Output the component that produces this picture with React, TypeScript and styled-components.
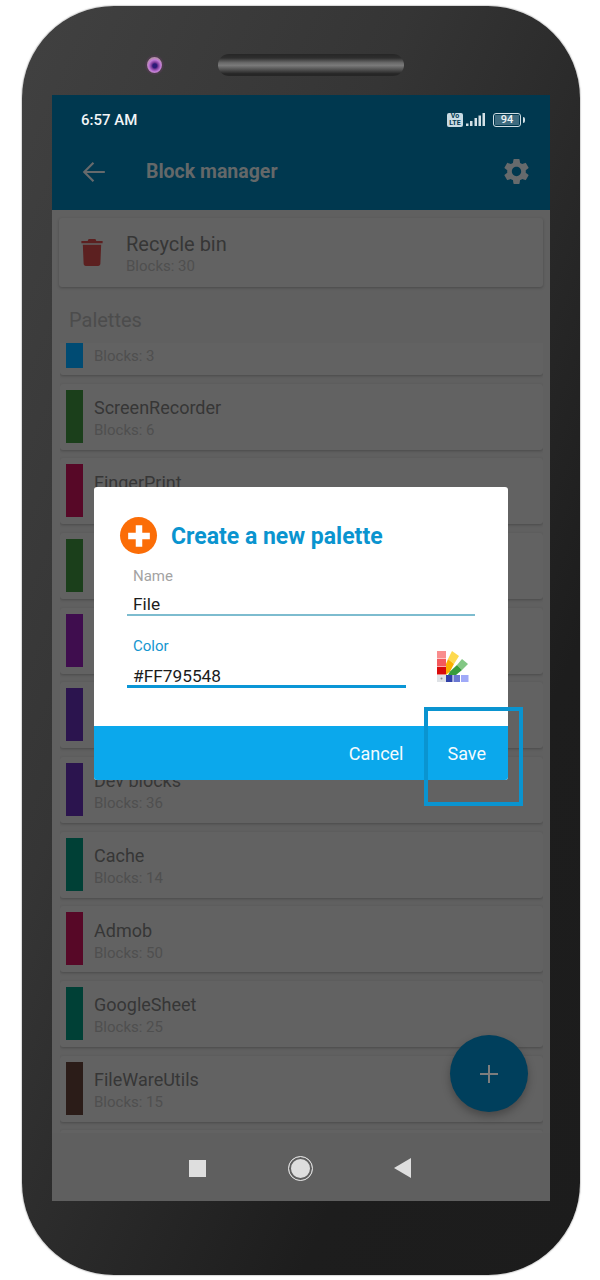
import React from 'react';
import styled, { createGlobalStyle } from 'styled-components';

// rows hidden behind the dialog carry no text, only their colour
const palettes: { name?: string; blocks?: number; color: string }[] = [
  { blocks: 3, color: '#004b73' },
  { name: 'ScreenRecorder', blocks: 6, color: '#1b3f1b' },
  { name: 'FingerPrint', color: '#570827' },
  { color: '#1b3f1b' },
  { color: '#3f0d4e' },
  { color: '#2b144e' },
  { name: 'Dev blocks', blocks: 36, color: '#2b144e' },
  { name: 'Cache', blocks: 14, color: '#004036' },
  { name: 'Admob', blocks: 50, color: '#570827' },
  { name: 'GoogleSheet', blocks: 25, color: '#004036' },
  { name: 'FileWareUtils', blocks: 15, color: '#2b1c18' },
];

function App() {
  return (
    <Page>
      <GlobalStyle />
      <Phone>
        <TopBezel>
          <Camera />
          <Speaker />
        </TopBezel>
        <Screen>
          <Header>
            <StatusBar>
              <Time>6:57 AM</Time>
              <StatusIcons>
                <VoLte>
                  <span>Vo</span>
                  <span>LTE</span>
                </VoLte>
                <Signal viewBox="0 0 19 13">
                  <rect x="0" y="10.500" width="2.500" height="2.500" />
                  <rect x="4" y="8" width="2.500" height="5" />
                  <rect x="8.500" y="5" width="2.500" height="8" />
                  <rect x="12.500" y="2.500" width="2.500" height="10.500" />
                  <rect x="16.500" y="0" width="2.500" height="13" />
                </Signal>
                <Battery>
                  <BatteryLevel>94</BatteryLevel>
                </Battery>
              </StatusIcons>
            </StatusBar>
            <Toolbar>
              <IconSvg viewBox="0 0 24 24" width="26" height="26" fill="none" stroke="#666a6c" strokeWidth="2">
                <path d="M22 12H3.500M11.500 3.500L3 12l8.500 8.500" />
              </IconSvg>
              <ToolbarTitle>Block manager</ToolbarTitle>
              <IconSvg viewBox="0 0 24 24" width="31" height="31" fill="#666a6c">
                <path d="M19.140 12.940c.04-.3.06-.61.06-.94 0-.32-.02-.64-.07-.94l2.030-1.580a.49.49 0 0 0 .12-.61l-1.920-3.320a.488.488 0 0 0-.59-.22l-2.390.96c-.5-.38-1.030-.7-1.620-.94l-.36-2.540a.484.484 0 0 0-.48-.41h-3.840c-.24 0-.43.17-.47.41l-.36 2.540c-.59.24-1.130.57-1.620.94l-2.390-.96c-.22-.08-.47 0-.59.22L2.740 8.870c-.12.21-.08.47.12.61l2.030 1.580c-.05.3-.09.63-.09.94s.02.64.07.94l-2.030 1.580a.49.49 0 0 0-.12.61l1.920 3.320c.12.22.37.29.59.22l2.390-.96c.5.38 1.030.7 1.620.94l.36 2.540c.05.24.24.41.48.41h3.840c.24 0 .44-.17.47-.41l.36-2.540c.59-.24 1.130-.56 1.620-.94l2.390.96c.22.08.47 0 .59-.22l1.920-3.320c.12-.22.07-.47-.12-.61l-2.010-1.580zM12 15.600c-1.980 0-3.600-1.620-3.600-3.600s1.620-3.600 3.600-3.600 3.600 1.620 3.600 3.600-1.620 3.600-3.600 3.600z" />
              </IconSvg>
            </Toolbar>
          </Header>

          <Body>
            <RecycleCard>
              <svg viewBox="0 0 22 28" width="22" height="27" fill="#5c2020">
                <path d="M7.500 0h7l1 2H22v2.500H0V2h6.500z" />
                <path d="M1.500 6h19l-.8 19.500c0 1.300-1 2.500-2.400 2.500H4.700c-1.400 0-2.400-1.200-2.400-2.500z" />
              </svg>
              <RecycleText>
                <RecycleTitle>Recycle bin</RecycleTitle>
                <BlockCount>Blocks: 30</BlockCount>
              </RecycleText>
            </RecycleCard>
            <SectionLabel>Palettes</SectionLabel>
            <ListViewport>
              <List>
                {palettes.map((palette, i) => (
                  <PaletteCard key={i}>
                    <ColorBar $color={palette.color} />
                    <PaletteText>
                      <PaletteName>{palette.name}</PaletteName>
                      {palette.blocks !== undefined && <BlockCount>Blocks: {palette.blocks}</BlockCount>}
                    </PaletteText>
                  </PaletteCard>
                ))}
                <PaletteCard />
              </List>
            </ListViewport>
          </Body>

          <NavBar>
            <NavSquare />
            <NavCircle />
            <svg viewBox="0 0 17 20" width="17" height="20" fill="#dedede">
              <path d="M17 0v20L0 10z" />
            </svg>
          </NavBar>

          <Fab>
            <svg viewBox="0 0 24 24" width="24" height="24" stroke="#7d7d7d" strokeWidth="2" fill="none">
              <path d="M12 3v18M3 12h18" />
            </svg>
          </Fab>

          <Dialog>
            <DialogContent>
              <DialogHeader>
                <AddBadge>
                  <svg viewBox="0 0 24 24" width="26" height="26" fill="#fff">
                    <path d="M9 2h6v7h7v6h-7v7H9v-7H2V9h7z" />
                  </svg>
                </AddBadge>
                <DialogTitle>Create a new palette</DialogTitle>
              </DialogHeader>
              <Field>
                <FieldLabel>Name</FieldLabel>
                <FieldValue>File</FieldValue>
              </Field>
              <ColorRow>
                <Field $active>
                  <FieldLabel $active>Color</FieldLabel>
                  <FieldValue $active>#FF795548</FieldValue>
                </Field>
                <svg viewBox="0 0 33 33" width="33" height="33">
                  <rect x="1" y="1" width="9" height="7.500" fill="#f98d8d" />
                  <rect x="1" y="9" width="9" height="7.500" fill="#f4595c" />
                  <rect x="1" y="17" width="9" height="7.500" fill="#d90a0a" />
                  <rect x="1" y="25" width="9" height="7" fill="#dfe2e6" />
                  <circle cx="5.500" cy="28.500" r="1" fill="#8a8f96" />
                  <path d="M16 1l7 5-5 8-6-5z" fill="#fdd94f" />
                  <path d="M12 9l6 5-4 7.500-4 3.500V14z" fill="#fbb000" />
                  <path d="M26 9l6 5-6 6-5-5z" fill="#82c784" />
                  <path d="M21 15l5 5-6 5h-8l2-3.500z" fill="#389c3c" />
                  <rect x="10" y="25" width="6.500" height="7" fill="#3241a8" />
                  <rect x="17.500" y="25" width="6.500" height="7" fill="#6a78d2" />
                  <rect x="25" y="25" width="7.500" height="7" fill="#a0aaf8" />
                </svg>
              </ColorRow>
            </DialogContent>
            <DialogActions>
              <ActionButton>Cancel</ActionButton>
              <ActionButton>Save</ActionButton>
            </DialogActions>
          </Dialog>

          <Highlight />
        </Screen>
      </Phone>
    </Page>
  );
}

export default App;

const GlobalStyle = createGlobalStyle`
  html, body {
    margin: 0;
    background: #fff;
    font-family: Roboto, "Liberation Sans", sans-serif;
  }
  * {
    box-sizing: border-box;
  }
`;

const Page = styled.div`
  width: 600px;
  height: 1280px;
  padding: 6px 0 0 22px;
  overflow: hidden;
`;

const Phone = styled.div`
  width: 558px;
  height: 1269px;
  padding: 0 30px;
  border-radius: 92px / 92px;
  background: linear-gradient(to bottom right, #414141 0%, #353535 35%, #1d1d1d 75%, #1c1c1c 100%);
  box-shadow: 0 0 1px 1px rgba(120, 120, 120, 0.3);
`;

const TopBezel = styled.div`
  height: 89px;
  display: flex;
  align-items: center;
  padding: 28px 0 0 93px;
  gap: 54px;
`;

const Camera = styled.div`
  width: 19px;
  height: 20px;
  flex: none;
  border-radius: 50%;
  border: 2px solid #4a3b4a;
  background: radial-gradient(circle at 52% 55%, #2c1a78 0 2px, #7d3d9c 3.500px, #c27ad8 6px, #b38fa8 8px);
`;

const Speaker = styled.div`
  width: 186px;
  height: 22px;
  flex: none;
  border-radius: 11px;
  background: linear-gradient(to bottom, #262626 0%, #2e2e2e 18%, #6a6a6a 40%, #7a7a7a 52%, #575757 68%, #262626 90%);
`;

const Screen = styled.div`
  position: relative;
  width: 498px;
  height: 1106px;
  display: flex;
  flex-direction: column;
  background: #606060;
`;

const Header = styled.header`
  height: 115px;
  background: #00384f;
`;

const StatusBar = styled.div`
  height: 48px;
  padding: 1px 29px 0 29px;
  display: flex;
  align-items: center;
  justify-content: space-between;
`;

const Time = styled.span`
  font-size: 15px;
  font-weight: 500;
  color: #f2f5f7;
`;

const StatusIcons = styled.div`
  display: flex;
  align-items: center;
`;

const VoLte = styled.div`
  width: 16px;
  height: 14px;
  margin-right: 3px;
  border-radius: 2px;
  background: #c9dbe3;
  color: #00384f;
  font-size: 7px;
  font-weight: 700;
  line-height: 6.500px;
  text-align: center;
  display: flex;
  flex-direction: column;
  justify-content: center;
`;

const Signal = styled.svg`
  width: 19px;
  height: 13px;
  margin-right: 8px;
  fill: #d3e0e6;
`;

const Battery = styled.div`
  position: relative;
  width: 28px;
  height: 14px;
  padding: 1px;
  border: 1px solid #cfdde3;
  border-radius: 3px;

  &::after {
    content: '';
    position: absolute;
    right: -5px;
    top: 3px;
    width: 2px;
    height: 6px;
    border-radius: 0 2px 2px 0;
    background: #cfdde3;
  }
`;

const BatteryLevel = styled.div`
  width: 24px;
  height: 10px;
  background: #3f6b7f;
  color: #eef3f5;
  font-size: 11px;
  font-weight: 500;
  line-height: 10px;
  text-align: center;
`;

const Toolbar = styled.div`
  height: 67px;
  padding: 0 18px 10px 29px;
  display: flex;
  align-items: center;
`;

const IconSvg = styled.svg`
  flex: none;
`;

const ToolbarTitle = styled.h1`
  flex: 1;
  margin: 0 0 0 39px;
  font-size: 19.500px;
  font-weight: 700;
  color: #646869;
`;

const Body = styled.main`
  flex: 1;
  min-height: 0;
  padding: 8px 7px 0;
  display: flex;
  flex-direction: column;
  background: #606060;
`;

const Card = styled.div`
  background: #626262;
  border-radius: 3px;
  box-shadow: 0 1px 3px rgba(0, 0, 0, 0.24);
`;

const RecycleCard = styled(Card)`
  height: 69px;
  flex: none;
  padding: 0 22px;
  display: flex;
  align-items: center;
  gap: 23px;
`;

const RecycleText = styled.div`
  padding-top: 2px;
`;

const RecycleTitle = styled.div`
  font-size: 20px;
  line-height: 24px;
  color: #363636;
`;

const BlockCount = styled.div`
  font-size: 15px;
  line-height: 20px;
  color: #4f4f4f;
`;

const SectionLabel = styled.div`
  height: 56px;
  flex: none;
  padding: 21px 0 0 10px;
  font-size: 20px;
  line-height: 24px;
  color: #4c4c4c;
`;

const ListViewport = styled.div`
  height: 790px;
  flex: none;
  margin: 0 0 0 1px;
  overflow: hidden;
`;

const List = styled.div`
  margin-top: -34px;
  display: flex;
  flex-direction: column;
  gap: 8.670px;
`;

const PaletteCard = styled(Card)`
  height: 66px;
  flex: none;
  padding: 6px 6px 7px;
  display: flex;
  align-items: center;
  gap: 11px;
`;

const ColorBar = styled.div<{ $color: string }>`
  width: 17px;
  height: 53px;
  flex: none;
  background: ${(p) => p.$color};
`;

const PaletteText = styled.div`
  height: 46px;
  margin-top: 6px;
`;

const PaletteName = styled.div`
  height: 24px;
  font-size: 18px;
  line-height: 24px;
  color: #363636;
`;

const NavBar = styled.nav`
  height: 68px;
  flex: none;
  padding: 2px 139px 0 137px;
  display: flex;
  align-items: center;
  justify-content: space-between;
  background: #5f5f5f;
`;

const NavSquare = styled.div`
  width: 17px;
  height: 17px;
  background: #dedede;
`;

const NavCircle = styled.div`
  width: 25px;
  height: 25px;
  border-radius: 50%;
  border: 1px solid #dedede;
  background: #dedede;
  box-shadow: inset 0 0 0 2px #5f5f5f;
`;

const Fab = styled.div`
  position: absolute;
  left: 398px;
  top: 940px;
  width: 78px;
  height: 77px;
  border-radius: 50%;
  background: #003f5c;
  box-shadow: 0 4px 8px rgba(0, 0, 0, 0.28);
  display: flex;
  align-items: center;
  justify-content: center;
`;

const Dialog = styled.div`
  position: absolute;
  left: 42px;
  top: 392px;
  width: 414px;
  height: 293px;
  display: flex;
  flex-direction: column;
  border-radius: 3px;
  overflow: hidden;
  background: #fff;
`;

const DialogContent = styled.div`
  flex: 1;
  padding: 30px 33px 0 33px;
  display: flex;
  flex-direction: column;
`;

const DialogHeader = styled.div`
  height: 37px;
  margin: 0 0 13px -7px;
  display: flex;
  align-items: center;
  gap: 14px;
`;

const AddBadge = styled.div`
  width: 37px;
  height: 37px;
  flex: none;
  border-radius: 50%;
  background: #fb6d07;
  display: flex;
  align-items: center;
  justify-content: center;
`;

const DialogTitle = styled.h2`
  margin: 2px 0 0;
  font-size: 23px;
  font-weight: 700;
  color: #0a94cf;
`;

const Field = styled.div<{ $active?: boolean }>`
  flex: ${(p) => (p.$active ? '0 0 279px' : 'none')};
  margin-top: ${(p) => (p.$active ? '0' : '-1px')};
`;

const FieldLabel = styled.div<{ $active?: boolean }>`
  padding-left: 6px;
  height: ${(p) => (p.$active ? '23px' : '22px')};
  font-size: 15px;
  line-height: 20px;
  color: ${(p) => (p.$active ? '#1596cf' : '#a3a3a3')};
`;

const FieldValue = styled.div<{ $active?: boolean }>`
  height: 28px;
  margin-top: ${(p) => (p.$active ? '1px' : '0')};
  padding: 6px 0 0 6px;
  font-size: 17.300px;
  line-height: 21px;
  color: #1c1c1c;
  border-bottom: ${(p) => (p.$active ? '3px solid #0a96d6' : '2px solid #7dbccf')};
`;

const ColorRow = styled.div`
  margin-top: 20px;
  display: flex;
  align-items: flex-start;
  justify-content: space-between;

  & > svg {
    margin: 14px 6px 0 0;
  }
`;

const DialogActions = styled.div`
  height: 54px;
  flex: none;
  padding-right: 22px;
  display: flex;
  align-items: center;
  justify-content: flex-end;
  gap: 44px;
  background: #0ba8ec;
`;

const ActionButton = styled.button`
  padding: 0;
  border: 0;
  background: none;
  font-family: inherit;
  font-size: 18px;
  color: #f4fbfe;
`;

const Highlight = styled.div`
  position: absolute;
  left: 372px;
  top: 612px;
  width: 99px;
  height: 99px;
  border: 4px solid #0a94d0;
  pointer-events: none;
`;
